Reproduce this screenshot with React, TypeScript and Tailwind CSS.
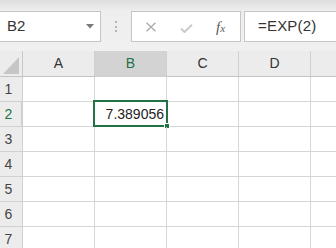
import React from 'react';

const COLS = ['A', 'B', 'C', 'D'];
const ROWS = [1, 2, 3, 4, 5, 6, 7];
const GREEN = 'border-[#217346]';

function CornerTriangle() {
  return (
    <svg width="16" height="17" viewBox="0 0 16 17" className="block">
      <polygon points="16,0 16,17 0,17" fill="#c6c6c6" />
    </svg>
  );
}

function Toolbar() {
  return (
    <div className="h-[51px] pt-[11px] flex items-start bg-[linear-gradient(to_bottom,#dedede,#eeeeee_11px,#f0f0f0)]">
      {/* Name box */}
      <div className="h-[31px] w-[101px] bg-white border border-[#c6c6c6] border-l-0 flex items-center justify-between pl-[7px] pr-[6px]">
        <span className="text-[15px] text-[#333]">B2</span>
        <svg width="8" height="5" viewBox="0 0 8 5">
          <polygon points="0,0 8,0 4,4.5" fill="#7a7a7a" />
        </svg>
      </div>
      {/* Splitter dots */}
      <div className="w-[30px] h-[31px] flex flex-col items-center justify-center gap-[2.5px]">
        <span className="w-[2px] h-[2px] bg-[#b4b4b4]" />
        <span className="w-[2px] h-[2px] bg-[#b4b4b4]" />
        <span className="w-[2px] h-[2px] bg-[#b4b4b4]" />
      </div>
      {/* Cancel / enter / fx */}
      <div className="h-[31px] w-[110px] bg-white border border-[#c6c6c6] relative">
        <svg width="12" height="10" viewBox="0 0 12 10" className="absolute left-[13px] top-[10px]">
          <path d="M1.5 0.8 L10.5 9.2 M10.5 0.8 L1.5 9.2" stroke="#a9a9a9" strokeWidth="1.3" fill="none" />
        </svg>
        <svg width="13" height="9" viewBox="0 0 13 9" className="absolute left-[48px] top-[12px]">
          <path d="M1 4.5 L4.5 8 L12 0.8" stroke="#cacaca" strokeWidth="2" fill="none" />
        </svg>
        <span className="absolute left-[84px] top-[4px] text-[15px] italic text-[#5a5a5a] font-['Liberation_Serif',serif]">
          f<span className="text-[11px]">x</span>
        </span>
      </div>
      {/* Formula input */}
      <div className="ml-[3px] h-[31px] flex-1 bg-white border border-[#c6c6c6] border-r-0 flex items-center pl-[13px]">
        <span className="text-[15px] text-[#333] tracking-[0.2px]">=EXP(2)</span>
      </div>
    </div>
  );
}

function HeaderRow() {
  return (
    <div className="flex h-[26px] bg-[#ececec] border-b border-[#c4c4c4]">
      <div className="w-[23px] shrink-0 border-r border-[#c8c8c8] flex items-end justify-end pr-[3px] pb-[2px]">
        <CornerTriangle />
      </div>
      {COLS.map(c => (
        <div
          key={c}
          className={`w-[72px] shrink-0 flex items-center justify-center text-[14px] border-r border-[#d0d0d0] ${
            c === 'B' ? `bg-[#d3d3d3] text-[#217346] border-b-2 ${GREEN} -mb-px` : 'text-[#333]'
          }`}
        >
          {c}
        </div>
      ))}
      <div className="flex-1" />
    </div>
  );
}

function BodyRow({ n }: { n: number }) {
  const sel = n === 2;
  return (
    <div className="flex h-[25px] border-b border-[#d6d6d6]">
      <div
        className={`w-[23px] shrink-0 flex items-center bg-[#ececec] -mb-px border-b border-[#d0d0d0] ${
          sel ? `bg-[#d3d3d3] text-[#217346] border-r-2 ${GREEN}` : 'text-[#444] border-r border-[#c8c8c8]'
        }`}
      >
        <span className="w-[17px] text-center text-[14px]">{n}</span>
      </div>
      {COLS.map(c => (
        <div key={c} className="w-[72px] shrink-0 border-r border-[#d6d6d6] relative">
          {sel && c === 'B' && (
            <>
              <div className="absolute inset-0 flex items-center justify-end pr-[2px] text-[14px] text-[#222]">
                7.389056
              </div>
              <div className={`absolute -left-[2px] -top-[2px] -right-[2px] -bottom-[1px] border-2 ${GREEN}`} />
              <div className="absolute -right-[4px] -bottom-[3px] w-[6px] h-[6px] bg-[#217346] border border-white" />
            </>
          )}
        </div>
      ))}
      <div className="flex-1" />
    </div>
  );
}

export default function App() {
  return (
    <div className="w-[336px] h-[248px] overflow-hidden bg-white font-['Liberation_Sans',Arial,sans-serif]">
      <Toolbar />
      <HeaderRow />
      {ROWS.map(n => (
        <BodyRow key={n} n={n} />
      ))}
    </div>
  );
}
